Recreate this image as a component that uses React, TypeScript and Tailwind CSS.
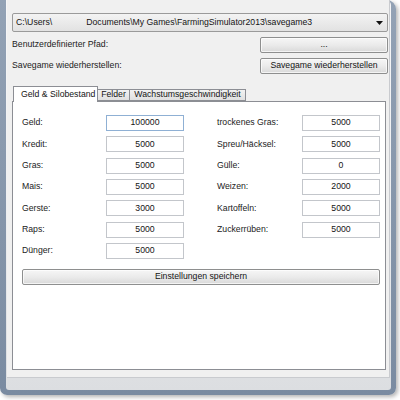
import React from "react";

const font = { fontFamily: '"Liberation Sans", Arial, sans-serif' };

function Btn({ label, className = "" }: { label: string; className?: string }) {
  return (
    <div
      className={`h-[16px] flex items-center justify-center rounded-[2px] border border-[#8e8f8f] bg-gradient-to-b from-[#f6f6f6] via-[#ebebeb] to-[#d9d9d9] text-[8.7px] text-[#141414] shadow-[inset_0_0_0_1px_rgba(255,255,255,0.7)] ${className}`}
    >
      {label}
    </div>
  );
}

function Field({ value, focused = false }: { value: string; focused?: boolean }) {
  return (
    <div
      className={`w-[78px] h-[16px] flex items-center justify-center bg-white border text-[8.7px] text-[#141414] ${
        focused ? "border-[#8fb0d4]" : "border-[#c3c6cb]"
      }`}
    >
      {value}
    </div>
  );
}

function Row({ label, value, labelW, focused }: { label: string; value: string; labelW: string; focused?: boolean }) {
  return (
    <div className="flex items-center h-[16px]">
      <div className={`${labelW} text-[8.7px] text-[#222]`}>{label}</div>
      <Field value={value} focused={focused} />
    </div>
  );
}

const left = [
  ["Geld:", "100000"],
  ["Kredit:", "5000"],
  ["Gras:", "5000"],
  ["Mais:", "5000"],
  ["Gerste:", "3000"],
  ["Raps:", "5000"],
  ["Dünger:", "5000"],
];

const right = [
  ["trockenes Gras:", "5000"],
  ["Spreu/Häcksel:", "5000"],
  ["Gülle:", "0"],
  ["Weizen:", "2000"],
  ["Kartoffeln:", "5000"],
  ["Zuckerrüben:", "5000"],
];

export default function App() {
  return (
    <div className="w-[400px] h-[400px] bg-white overflow-hidden" style={font}>
      {/* window frame */}
      <div className="w-[396px] h-[395px] bg-gradient-to-b from-[#93a2b5] to-[#7a8ba1] rounded-tr-[9px] rounded-b-[7px] pl-[6px] pr-[5px] pb-[5px] shadow-[2px_2px_4px_rgba(0,0,0,0.3)]">
        <div className="h-full bg-gradient-to-b from-[#f6f6f7] via-[#eeeff1] to-[#dcdee1] rounded-tr-[5px] rounded-b-[3px] px-[1px] pb-[12px] flex flex-col">
          {/* client area */}
          <div className="flex-1 bg-[#f0f0f0] border-b border-r border-[#c9cbcf] pl-[5px] pr-[1px] pt-[13px] flex flex-col">
            {/* path combo */}
            <div className="h-[19px] flex items-center rounded-[2px] border border-[#9a9a9a] bg-gradient-to-b from-[#f3f3f3] to-[#e2e2e2] pl-[3px] pr-[3px] text-[8.7px] text-[#141414]">
              <span>C:\Users\</span>
              <span className="w-[34px]" />
              <span>Documents\My Games\FarmingSimulator2013\savegame3</span>
              <svg className="ml-auto mr-[1px]" width="7" height="4" viewBox="0 0 7 4">
                <path d="M0 0H7L3.5 4Z" fill="#111" />
              </svg>
            </div>

            <div className="mt-[5px] flex items-center justify-between">
              <div className="text-[8.7px] text-[#222]">Benutzerdefinierter Pfad:</div>
              <Btn label="..." className="w-[128px]" />
            </div>
            <div className="mt-[5px] flex items-center justify-between">
              <div className="text-[8.7px] text-[#222]">Savegame wiederherstellen:</div>
              <Btn label="Savegame wiederherstellen" className="w-[128px]" />
            </div>

            {/* tabs */}
            <div className="mt-[12px] flex items-end h-[15px] pl-[1px] relative z-10">
              <div className="w-[85px] h-[16px] -mb-[1px] bg-white border border-b-0 border-[#8c8e94] pl-[7px] flex items-center text-[8.7px] text-[#141414]">
                Geld &amp; Silobestand
              </div>
              <div className="w-[32px] h-[12px] bg-gradient-to-b from-[#f2f2f2] to-[#e0e0e0] border border-l-0 border-[#8c8e94] flex items-center justify-center text-[8.7px] text-[#141414]">
                Felder
              </div>
              <div className="w-[116px] h-[12px] bg-gradient-to-b from-[#f2f2f2] to-[#e0e0e0] border border-l-0 border-[#8c8e94] flex items-center justify-center text-[8.7px] text-[#141414]">
                Wachstumsgeschwindigkeit
              </div>
            </div>

            {/* tab page */}
            <div className="flex-1 mb-[7px] mr-[2px] bg-white border border-[#8c8e94] pt-[13px] pl-[9px] flex flex-col">
              <div className="flex gap-[33px]">
                <div className="flex flex-col gap-[5.33px]">
                  {left.map(([l, v], i) => (
                    <Row key={l} label={l} value={v} labelW="w-[84px]" focused={i === 0} />
                  ))}
                </div>
                <div className="flex flex-col gap-[5.33px]">
                  {right.map(([l, v]) => (
                    <Row key={l} label={l} value={v} labelW="w-[85px]" />
                  ))}
                </div>
              </div>
              <Btn label="Einstellungen speichern" className="mt-[10px] w-[358px]" />
            </div>
          </div>
        </div>
      </div>
    </div>
  );
}
